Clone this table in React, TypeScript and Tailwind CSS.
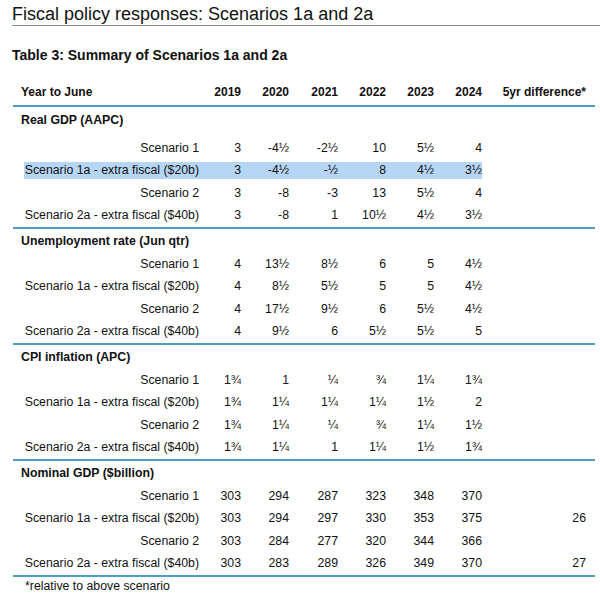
type Row = {
  label: string;
  values: string[];
  diff?: string;
  highlight?: boolean;
};

type Section = {
  title: string;
  rows: Row[];
};

const years = ["2019", "2020", "2021", "2022", "2023", "2024"];

const sections: Section[] = [
  {
    title: "Real GDP (AAPC)",
    rows: [
      { label: "Scenario 1", values: ["3", "-4½", "-2½", "10", "5½", "4"] },
      { label: "Scenario 1a - extra fiscal ($20b)", values: ["3", "-4½", "-½", "8", "4½", "3½"], highlight: true },
      { label: "Scenario 2", values: ["3", "-8", "-3", "13", "5½", "4"] },
      { label: "Scenario 2a - extra fiscal ($40b)", values: ["3", "-8", "1", "10½", "4½", "3½"] },
    ],
  },
  {
    title: "Unemployment rate (Jun qtr)",
    rows: [
      { label: "Scenario 1", values: ["4", "13½", "8½", "6", "5", "4½"] },
      { label: "Scenario 1a - extra fiscal ($20b)", values: ["4", "8½", "5½", "5", "5", "4½"] },
      { label: "Scenario 2", values: ["4", "17½", "9½", "6", "5½", "4½"] },
      { label: "Scenario 2a - extra fiscal ($40b)", values: ["4", "9½", "6", "5½", "5½", "5"] },
    ],
  },
  {
    title: "CPI inflation (APC)",
    rows: [
      { label: "Scenario 1", values: ["1¾", "1", "¼", "¾", "1¼", "1¾"] },
      { label: "Scenario 1a - extra fiscal ($20b)", values: ["1¾", "1¼", "1¼", "1¼", "1½", "2"] },
      { label: "Scenario 2", values: ["1¾", "1¼", "¼", "¾", "1¼", "1½"] },
      { label: "Scenario 2a - extra fiscal ($40b)", values: ["1¾", "1¼", "1", "1¼", "1½", "1¾"] },
    ],
  },
  {
    title: "Nominal GDP ($billion)",
    rows: [
      { label: "Scenario 1", values: ["303", "294", "287", "323", "348", "370"] },
      { label: "Scenario 1a - extra fiscal ($20b)", values: ["303", "294", "297", "330", "353", "375"], diff: "26" },
      { label: "Scenario 2", values: ["303", "284", "277", "320", "344", "366"] },
      { label: "Scenario 2a - extra fiscal ($40b)", values: ["303", "283", "289", "326", "349", "370"], diff: "27" },
    ],
  },
];

// label column + six year columns + 5yr difference
const gridCols = "grid grid-cols-[186px_42px_48px_49px_48px_48px_48px_104px]";

function DataRow({ row }: { row: Row }) {
  const hl = row.highlight ? "bg-[#b6d6f6]" : "";
  return (
    <div className={`${gridCols} h-[22.5px] items-center`}>
      <div className="flex justify-end">
        <span className={`h-[17px] pl-px leading-[17px] ${hl}`}>{row.label}</span>
      </div>
      {row.values.map((v, i) => (
        <div key={i} className={`h-[17px] text-right leading-[17px] ${hl}`}>
          {v}
        </div>
      ))}
      <div className="text-right leading-[17px]">{row.diff ?? ""}</div>
    </div>
  );
}

function TableSection({ section, first }: { section: Section; first: boolean }) {
  return (
    <div className="border-t-2 border-[#4a9fcb]">
      <div
        className={
          first
            ? "h-[30px] pl-2 pt-[6px] font-bold leading-[15px]"
            : "h-[24px] pl-2 pt-[5px] font-bold leading-[15px]"
        }
      >
        {section.title}
      </div>
      {section.rows.map((row) => (
        <DataRow key={row.label} row={row} />
      ))}
    </div>
  );
}

export default function App() {
  return (
    <div
      className="h-[595px] w-[600px] overflow-hidden bg-white text-[#111]"
      style={{ fontFamily: "'Liberation Sans', Arial, sans-serif" }}
    >
      <div className="ml-3 border-b border-[#8a8a8a] pt-[3px] text-[18px] leading-[22px]">
        Fiscal policy responses: Scenarios 1a and 2a
      </div>

      <div className="ml-3 mt-[21px] text-[14px] font-bold leading-[16px]">
        Table 3: Summary of Scenarios 1a and 2a
      </div>

      <div className="ml-[13px] w-[582px] text-[12.3px]">
        <div className={`${gridCols} mt-[21px] pb-[4px] text-[12px] font-bold leading-[17px]`}>
          <div className="pl-2">Year to June</div>
          {years.map((y) => (
            <div key={y} className="text-right">
              {y}
            </div>
          ))}
          <div className="whitespace-nowrap text-right">5yr difference*</div>
        </div>

        {sections.map((s, i) => (
          <TableSection key={s.title} section={s} first={i === 0} />
        ))}

        <div className="border-t-2 border-[#4a9fcb] pl-3 pt-[2px] leading-[15px]">
          *relative to above scenario
        </div>
      </div>
    </div>
  );
}
